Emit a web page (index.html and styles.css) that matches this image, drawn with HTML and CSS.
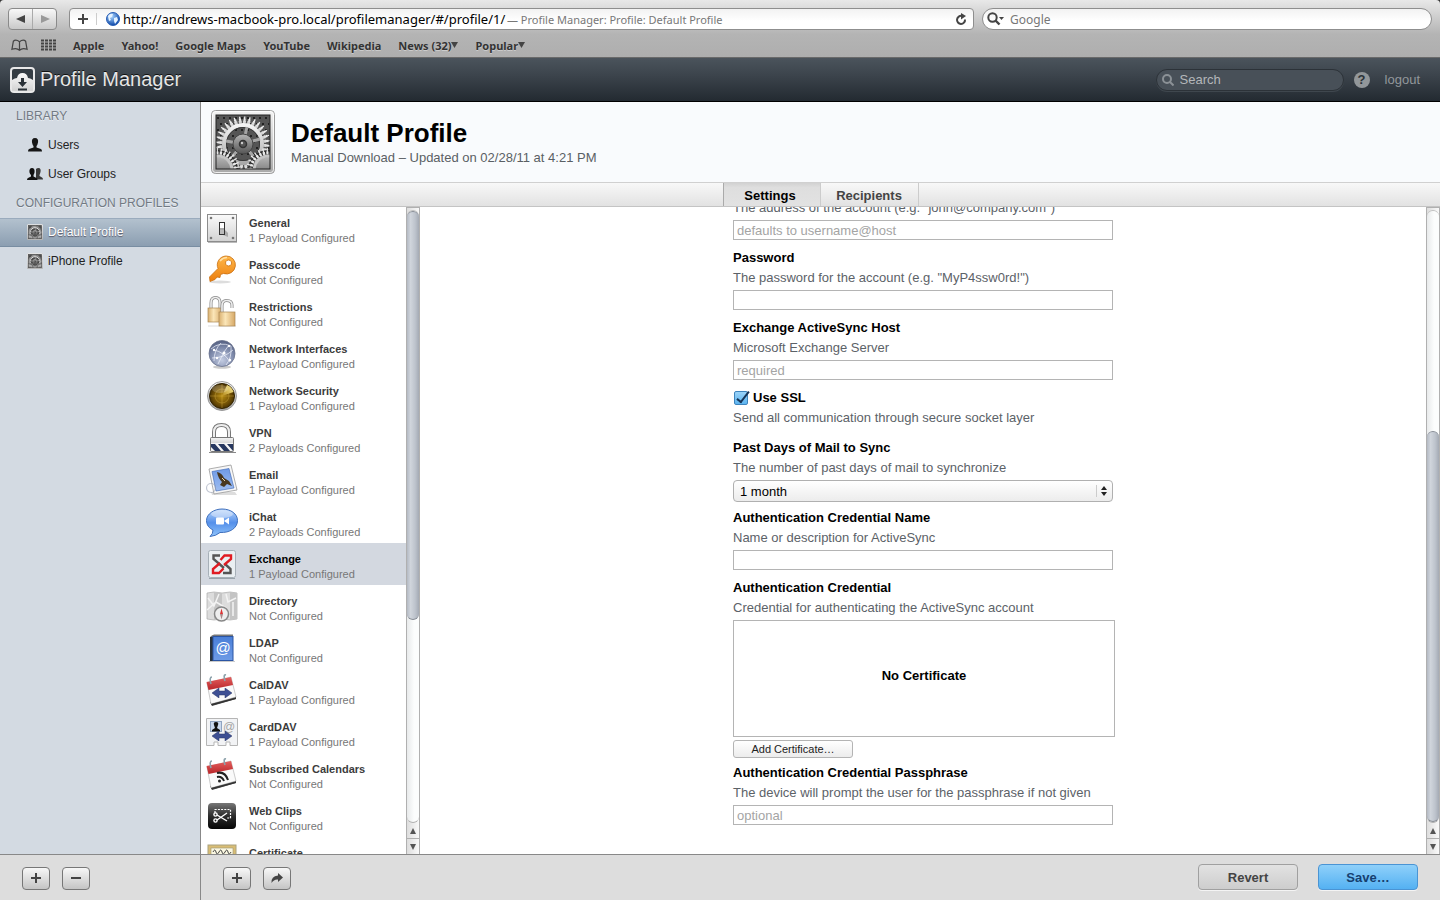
FILE: index.html
```html
<!DOCTYPE html>
<html lang="en">
<head>
    <meta charset="UTF-8">
    <meta name="viewport" content="width=device-width, initial-scale=1.0">
    <link rel="stylesheet" href="styles.css">
    <title>Profile Manager: Profile: Default Profile</title>
</head>
<body>
    <!-- shared gradients and icons -->
    <svg class="defs" width="0" height="0" aria-hidden="true">
        <defs>
            <linearGradient id="metal" x1="0" y1="0" x2="0" y2="1"><stop offset="0" stop-color="#f4f4f4"/><stop offset="1" stop-color="#a8a8a8"/></linearGradient>
            <linearGradient id="steel" x1="0" y1="0" x2="0" y2="1"><stop offset="0" stop-color="#b5b5b5"/><stop offset="1" stop-color="#555"/></linearGradient>
            <linearGradient id="plate" x1="0" y1="0" x2="0" y2="1"><stop offset="0" stop-color="#fafafa"/><stop offset="1" stop-color="#d2d2d2"/></linearGradient>
            <linearGradient id="orange" x1="0" y1="0" x2="0" y2="1"><stop offset="0" stop-color="#ffb84a"/><stop offset="1" stop-color="#ec7d0c"/></linearGradient>
            <linearGradient id="brass" x1="0" y1="0" x2="1" y2="0"><stop offset="0" stop-color="#d9b070"/><stop offset=".4" stop-color="#fbe6b8"/><stop offset="1" stop-color="#d6a866"/></linearGradient>
            <radialGradient id="globe" cx=".5" cy=".75" r=".8"><stop offset="0" stop-color="#c3cce2"/><stop offset=".6" stop-color="#7c88a9"/><stop offset="1" stop-color="#4a5577"/></radialGradient>
            <radialGradient id="radar" cx=".5" cy=".5" r=".6"><stop offset="0" stop-color="#b58a12"/><stop offset=".6" stop-color="#6e4e05"/><stop offset="1" stop-color="#2b1d00"/></radialGradient>
            <linearGradient id="sweep" x1="0" y1="1" x2="1" y2="0"><stop offset="0" stop-color="#b48a1c"/><stop offset="1" stop-color="#fff3a0"/></linearGradient>
            <linearGradient id="bubble" x1="0" y1="0" x2="0" y2="1"><stop offset="0" stop-color="#b9d6fb"/><stop offset=".5" stop-color="#5590ea"/><stop offset="1" stop-color="#8fc4fb"/></linearGradient>
            <linearGradient id="sky" x1="0" y1="0" x2="0" y2="1"><stop offset="0" stop-color="#6f9ae6"/><stop offset="1" stop-color="#9dbcf0"/></linearGradient>
            <linearGradient id="book" x1="0" y1="0" x2="0" y2="1"><stop offset="0" stop-color="#4a7fd8"/><stop offset="1" stop-color="#6d9be6"/></linearGradient>
            <linearGradient id="red" x1="0" y1="0" x2="0" y2="1"><stop offset="0" stop-color="#e4605f"/><stop offset="1" stop-color="#b82529"/></linearGradient>
            <linearGradient id="dark" x1="0" y1="0" x2="0" y2="1"><stop offset="0" stop-color="#777"/><stop offset=".5" stop-color="#2c2c2c"/><stop offset="1" stop-color="#050505"/></linearGradient>
            <radialGradient id="earth" cx=".4" cy=".3" r=".7"><stop offset="0" stop-color="#a9d4ff"/><stop offset="1" stop-color="#0b47a8"/></radialGradient>
            <clipPath id="gear-clip"><rect x="5" y="5" width="54" height="54"/></clipPath>
        </defs>
        <symbol id="gears" viewBox="0 0 64 64">
            <rect x=".5" y=".5" width="63" height="63" rx="4" fill="url(#metal)" stroke="#9a9a9a"/>
            <rect x="1.5" y="1.5" width="61" height="61" rx="3" fill="none" stroke="#fff" stroke-opacity=".8"/>
            <rect x="5" y="5" width="54" height="54" fill="#555"/>
            <g clip-path="url(#gear-clip)">
                <path d="M6 8H58M9 14H58M6 20H58M9 26H58M6 32H58M9 38H58M6 44H58" stroke="#222" stroke-width="2" stroke-dasharray="2 4"/>
                <!-- main gear: each tooth is a wide base with a narrow tip -->
                <g fill="none">
                    <circle cx="32" cy="34" r="22" stroke="#d2d2d2" stroke-width="3" pathLength="64" stroke-dasharray="1.4 .6"/>
                    <circle cx="32" cy="34" r="24" stroke="#e2e2e2" stroke-width="3" pathLength="64" stroke-dasharray=".9 1.1" stroke-dashoffset="-.25"/>
                    <circle cx="32" cy="34" r="26" stroke="#f2f2f2" stroke-width="3" pathLength="64" stroke-dasharray=".5 1.5" stroke-dashoffset="-.45"/>
                    <circle cx="32" cy="34" r="19" stroke="url(#metal)" stroke-width="4"/>
                    <circle cx="32" cy="34" r="16.5" stroke="#3a3a3a"/>
                    <path d="M32 34L36 17M32 34L15 31M32 34L49 29M32 34L21 47M32 34L43 47" stroke="#a5a5a5" stroke-width="3"/>
                </g>
                <circle cx="32" cy="34" r="10" fill="url(#steel)" stroke="#444"/>
                <circle cx="32" cy="34" r="3.5" fill="#555" stroke="#333" stroke-width="1.5"/>
                <circle cx="31" cy="33" r="1.2" fill="#ccc"/>
                <circle cx="7" cy="60" r="20" fill="#2c2c2c"/>
                <circle cx="57" cy="60" r="20" fill="#2c2c2c"/>
                <circle cx="7" cy="60" r="13" fill="url(#steel)"/>
                <circle cx="57" cy="60" r="13" fill="url(#steel)"/>
                <g fill="none" stroke="#e8e8e8">
                    <circle cx="7" cy="60" r="17" stroke-width="3" pathLength="60" stroke-dasharray="1.3 .7"/>
                    <circle cx="7" cy="60" r="20" stroke-width="4" pathLength="60" stroke-dasharray=".6 1.4" stroke-dashoffset="-.35"/>
                    <circle cx="57" cy="60" r="17" stroke-width="3" pathLength="60" stroke-dasharray="1.3 .7"/>
                    <circle cx="57" cy="60" r="20" stroke-width="4" pathLength="60" stroke-dasharray=".6 1.4" stroke-dashoffset="-.35"/>
                    <circle cx="7" cy="60" r="14" stroke-width="3" stroke="#c4c4c4"/>
                    <circle cx="57" cy="60" r="14" stroke-width="3" stroke="#c4c4c4"/>
                </g>
            </g>
            <rect x="5" y="5" width="54" height="54" fill="none" stroke="#222"/>
        </symbol>
        <symbol id="calendar" viewBox="0 0 32 32">
            <path d="M4 28L30 22V25L6 32Z" fill="#555"/>
            <path d="M1 9L25 3L30 23L5 30Z" fill="#fafafa" stroke="#aaa" stroke-width=".6"/>
            <path d="M5 30L30 23.5V25L6 31.5Z" fill="#333"/>
            <path d="M.5 8L25 3L27 11L2.5 16Z" fill="url(#red)"/>
            <path d="M5 10Q3 3 6 3M19 7Q17 0 20 1" fill="none" stroke="#8ca1ab" stroke-width="1.6"/>
        </symbol>
        <symbol id="arrows" viewBox="0 0 20 10">
            <path d="M0 5L7 0V3H13V0L20 5L13 10V7H7V10Z" fill="#3d4f93" stroke="#293667" stroke-width=".5"/>
        </symbol>
    </svg>

    <div class="browser">
        <div class="toolbar">
            <div class="history">
                <button type="button" aria-label="Back"><svg width="10" height="10" viewBox="0 0 10 10"><path d="M9 1V9L0 5Z" fill="#444"/></svg></button>
                <button type="button" aria-label="Forward"><svg width="10" height="10" viewBox="0 0 10 10"><path d="M1 1V9L10 5Z" fill="#999"/></svg></button>
            </div>
            <div class="location">
                <button type="button" class="add-bookmark" aria-label="Add bookmark"><svg width="12" height="12" viewBox="0 0 12 12"><path d="M6 1V11M1 6H11" stroke="#444" stroke-width="2"/></svg></button>
                <svg class="site-icon" width="14" height="14" viewBox="0 0 14 14"><circle cx="7" cy="7" r="6.5" fill="url(#earth)" stroke="#2b5fb5"/><path d="M2 4Q4 1 7 2L6 5L4 6L5 8L3 9ZM8 6L11 5L12 8L9 12L8 9Z" fill="#e6f3ff"/></svg>
                <input class="url" type="text" aria-label="Address" value="http://andrews-macbook-pro.local/profilemanager/#/profile/1/">
                <span class="page-title">— Profile Manager: Profile: Default Profile</span>
                <button type="button" class="reload" aria-label="Reload"><svg width="12" height="14" viewBox="0 0 12 14"><path d="M10 7.5A4 4 0 1 1 7 4" fill="none" stroke="#444" stroke-width="2"/><path d="M6 1L11 4L6 7.5Z" fill="#444"/></svg></button>
            </div>
            <div class="google">
                <svg width="19" height="14" viewBox="0 0 19 14"><circle cx="5.5" cy="5.5" r="4.2" fill="none" stroke="#444" stroke-width="2"/><path d="M8.5 8.5L12.5 12.5" stroke="#444" stroke-width="2.4"/><path d="M12 5H17L14.500 8Z" fill="#444"/></svg>
                <input type="text" aria-label="Google search" placeholder="Google">
            </div>
        </div>
        <nav class="bookmarks">
            <div class="bookmark-icons">
                <a href="#" aria-label="Show all bookmarks"><svg width="17" height="13" viewBox="0 0 18 13"><path d="M9 2.5Q5 -.5 2.5 2L1 10.5Q6 8.5 9 11.5Q12 8.5 17 10.5L15.5 2Q13 -.5 9 2.5ZM9 2.5V11.5" fill="none" stroke="#444" stroke-width="1.3"/></svg></a>
                <a href="#" aria-label="Top sites"><svg width="15" height="12" viewBox="0 0 15 12"><path d="M0 1.5H15M0 4.5H15M0 7.5H15M0 10.5H15" stroke="#444" stroke-width="2" stroke-dasharray="3 1"/></svg></a>
            </div>
            <a href="#">Apple</a>
            <a href="#">Yahoo!</a>
            <a href="#">Google Maps</a>
            <a href="#">YouTube</a>
            <a href="#">Wikipedia</a>
            <a href="#">News (32)<svg width="7" height="6" viewBox="0 0 7 6"><path d="M0 0H7L3.5 6Z" fill="#444"/></svg></a>
            <a href="#">Popular<svg width="7" height="6" viewBox="0 0 7 6"><path d="M0 0H7L3.5 6Z" fill="#444"/></svg></a>
        </nav>
    </div>

    <header class="app-header">
        <svg width="25" height="26" viewBox="0 0 25 26"><rect x="1" y="1" width="23" height="24" rx="3" fill="#343c43" stroke="#e8e8e8" stroke-width="2"/><path d="M2 13Q5 11 7 11Q8 6 12.5 6Q17 6 18 11Q20 11 23 13V24H2Z" fill="url(#plate)"/><path d="M11 11H14V15H17L12.5 20L8 15H11Z" fill="#2b3238"/><path d="M8 22.5H17" stroke="#2b3238" stroke-width="2"/></svg>
        <h1>Profile Manager</h1>
        <div class="search">
            <svg width="12" height="12" viewBox="0 0 12 12"><circle cx="5" cy="5" r="4" fill="none" stroke="#8b9196" stroke-width="2"/><path d="M8 8L11.5 11.5" stroke="#8b9196" stroke-width="2"/></svg>
            <input type="text" aria-label="Search" placeholder="Search">
        </div>
        <button type="button" class="help" aria-label="Help">?</button>
        <a class="logout" href="#">logout</a>
    </header>

    <div class="content">
        <nav class="sidebar">
            <h2>LIBRARY</h2>
            <a href="#"><svg width="16" height="16" viewBox="0 0 16 16"><path d="M8 1C10.5 1 11.5 3 11 5.5Q10.5 8 9.5 9V10.5L14 12Q15 12.5 15 14.5H1Q1 12.5 2 12L6.5 10.5V9Q5.5 8 5 5.5C4.5 3 5.5 1 8 1Z" fill="#161616"/></svg>Users</a>
            <a href="#"><svg width="16" height="16" viewBox="0 0 16 16"><path d="M11.5 2C13.5 2 14 4 13.5 6Q13 8 12.5 9V10L15 11.5Q16 12 16 13.5H9V3Q10 2 11.5 2Z" fill="#383838"/><path d="M5 2C7 2 8 4 7.5 6.5Q7 8 6.5 9V10.5L9.5 12Q10.5 12.5 10.5 14H0Q0 12.5 1 12L4 10.5V9Q3 8 2.5 6.5C2 4 3 2 5 2Z" fill="#111"/></svg>User Groups</a>
            <h2>CONFIGURATION PROFILES</h2>
            <a href="#" class="selected"><svg width="16" height="16"><use href="#gears"/></svg>Default Profile</a>
            <a href="#"><svg width="16" height="16"><use href="#gears"/></svg>iPhone Profile</a>
        </nav>

        <main class="main">
            <div class="profile-header">
                <svg width="64" height="64"><use href="#gears"/></svg>
                <div>
                    <h2>Default Profile</h2>
                    <p>Manual Download – Updated on 02/28/11 at 4:21 PM</p>
                </div>
            </div>
            <div class="tabs">
                <button type="button" class="active">Settings</button>
                <button type="button">Recipients</button>
            </div>

            <div class="panes">
                <nav class="payloads">
                    <a href="#">
                        <svg width="32" height="32" viewBox="0 0 32 32"><rect x="1.5" y="2.5" width="29" height="27" fill="url(#plate)" stroke="#8c8c8c"/><path d="M2 30.5H31" stroke="#bbb"/><g fill="#777"><circle cx="5" cy="6" r="1.3"/><circle cx="27" cy="6" r="1.3"/><circle cx="5" cy="26" r="1.3"/><circle cx="27" cy="26" r="1.3"/></g><path d="M17 16L22 21V25L17 23Z" fill="#aaa"/><rect x="13.5" y="10.5" width="5" height="12" fill="#fff" stroke="#333"/><path d="M14 18H18V22H14Z" fill="#bbb"/><path d="M14 17H18" stroke="#555"/></svg>
                        <span><b>General</b>1 Payload Configured</span>
                    </a>
                    <a href="#">
                        <svg width="32" height="32" viewBox="0 0 32 32"><ellipse cx="14" cy="28" rx="11" ry="1.5" fill="#ddd"/><path fill-rule="evenodd" d="M20 2A9 9 0 1 1 17.5 19.5L14.5 20.5L14 23.5L11 23L9 25.5L4 27.5L3.5 23L12 14.5A9 9 0 0 1 20 2ZM22.5 6A3 3 0 1 0 22.6 6Z" fill="url(#orange)" stroke="#c96f10" stroke-width=".8"/><path d="M14 7Q17 3.5 21 3.5" fill="none" stroke="#ffe0a6" stroke-width="1.5"/></svg>
                        <span><b>Passcode</b>Not Configured</span>
                    </a>
                    <a href="#">
                        <svg width="32" height="32" viewBox="0 0 32 32"><path d="M2 30H30" stroke="#ddd"/><path d="M5 14V7Q5 1.5 9.5 1.5Q14 1.5 14 7V14" fill="none" stroke="#888" stroke-width="3"/><path d="M5 14V7Q5 1.5 9.5 1.5Q14 1.5 14 7V14" fill="none" stroke="#eee" stroke-width="1.6"/><rect x="2" y="12" width="14" height="14" fill="url(#brass)" stroke="#a88653" stroke-width=".7"/><path d="M16 17V10Q16 4.5 20.5 4.5Q26 4.5 26 9V12" fill="none" stroke="#888" stroke-width="3"/><path d="M16 17V10Q16 4.5 20.5 4.5Q26 4.5 26 9V12" fill="none" stroke="#eee" stroke-width="1.6"/><rect x="13" y="16" width="16" height="14" fill="url(#brass)" stroke="#a88653" stroke-width=".7"/></svg>
                        <span><b>Restrictions</b>Not Configured</span>
                    </a>
                    <a href="#">
                        <svg width="32" height="32" viewBox="0 0 32 32"><ellipse cx="16" cy="29" rx="9" ry="1.8" fill="#ccc"/><circle cx="16" cy="15.500" r="13" fill="url(#globe)" stroke="#69728d" stroke-width=".8"/><path d="M5 11Q14 3 25 8M8 23Q8 12 15 5M8 12Q18 14 24 24M6 20Q18 20 27 12M12 26L18 14L23 7M20 27Q26 20 25 8" fill="none" stroke="#f4f7ff" stroke-width=".7"/><g fill="#fff"><circle cx="18" cy="15" r="1.5"/><circle cx="8" cy="12" r="1.2"/><circle cx="23" cy="8" r="1.2"/><circle cx="11" cy="20" r="1.2"/><circle cx="24" cy="22" r="1.2"/></g></svg>
                        <span><b>Network Interfaces</b>1 Payload Configured</span>
                    </a>
                    <a href="#">
                        <svg width="32" height="32" viewBox="0 0 32 32"><circle cx="16" cy="16" r="14.5" fill="url(#metal)" stroke="#888" stroke-width=".8"/><circle cx="16" cy="16" r="12.5" fill="url(#radar)" stroke="#332300"/><path d="M16 16L21 5Q26 7 27.5 12Z" fill="url(#sweep)"/><path d="M4 16H28M16 4V28" stroke="#e0bb4b" stroke-opacity=".5" stroke-width=".7"/><circle cx="16" cy="16" r="7" fill="none" stroke="#e0bb4b" stroke-opacity=".5" stroke-width=".7"/><ellipse cx="14" cy="9" rx="8" ry="4" fill="#fff" fill-opacity=".2"/></svg>
                        <span><b>Network Security</b>1 Payload Configured</span>
                    </a>
                    <a href="#">
                        <svg width="32" height="32" viewBox="0 0 32 32"><path d="M8 17V10Q8 3 15.5 3Q23 3 23 10V17" fill="none" stroke="#777" stroke-width="4"/><path d="M8 17V10Q8 3 15.5 3Q23 3 23 10V17" fill="none" stroke="#eee" stroke-width="2"/><path d="M3 30.5H30" stroke="#888"/><rect x="4.5" y="15.5" width="23" height="14" rx="1" fill="url(#metal)" stroke="#777"/><path d="M5 21H27V29H5Z" fill="#f4f4f4"/><path d="M5 22H9L15 29H9L5 25ZM12 22H18L24 29H18ZM21 22H27V29Z" fill="#27375f"/></svg>
                        <span><b>VPN</b>2 Payloads Configured</span>
                    </a>
                    <a href="#">
                        <svg width="32" height="32" viewBox="0 0 32 32"><path d="M6 31H31L29 28H5Z" fill="#ddd"/><path d="M3 5L25 1L31 26L8 30Z" fill="#f7f7f7" stroke="#999" stroke-width=".8"/><path d="M6 7.5L23 4.5L28 24L10 27Z" fill="url(#sky)" stroke="#3a65b4" stroke-width=".6"/><path d="M11 8Q16 9 18 14L23 17L26 22L21 20L18 23L14 21L16 18Q12 14 11 8Z" fill="#49381f"/><path d="M16 14L19 17" stroke="#e8d8b0"/><circle cx="5" cy="24" r="4.5" fill="none" stroke="#9aa2b5" stroke-width="1.2" stroke-opacity=".6"/></svg>
                        <span><b>Email</b>1 Payload Configured</span>
                    </a>
                    <a href="#">
                        <svg width="32" height="32" viewBox="0 0 32 32"><path d="M16 3C25 3 31.500 8 31.500 14.5C31.500 22 24 27 14 26.500Q10 30 4 30.500Q7 28 7 24C3 22 .5 19 .5 14.5C.5 8 8 3 16 3Z" fill="url(#bubble)" stroke="#3f70bd"/><ellipse cx="16" cy="8" rx="11" ry="4" fill="#fff" fill-opacity=".4"/><rect x="10" y="11.5" width="8" height="7" rx="1" fill="#fff"/><path d="M18 15L23 11.5V18.5Z" fill="#fff"/></svg>
                        <span><b>iChat</b>2 Payloads Configured</span>
                    </a>
                    <a href="#" class="selected">
                        <svg width="32" height="32" viewBox="0 0 32 32"><rect x="2.5" y="2.5" width="27" height="27" rx="2" fill="#eaeff2" stroke="#a7b0b8"/><path d="M3 30.5H29" stroke="#99a3aa"/><g fill="none" stroke-width="2.4"><path d="M14 7.5H7.5V11L18 20" stroke="#555"/><path d="M17 25H24.500V21L19 16" stroke="#555"/><path d="M14.500 12L18.500 7.500H25V11L18 17" stroke="#e01b22"/><path d="M17.500 20.500L13 25H7V21L14 15" stroke="#e01b22"/></g></svg>
                        <span><b>Exchange</b>1 Payload Configured</span>
                    </a>
                    <a href="#">
                        <svg width="32" height="32" viewBox="0 0 32 32"><path d="M1 3L8 2L16 3L24 2L31 3V29L24 30L16 29L8 30L1 29Z" fill="#dcdcdc" stroke="#aaa" stroke-width=".7"/><path d="M8 2V30L16 29V3ZM24 2V30L31 29V3Z" fill="#c4c4c4"/><path d="M2 8L8 16L13 4M1 20L10 12L20 18M20 4L22 12L30 8M27 12V26" fill="none" stroke="#f3f3f3" stroke-width="1.5"/><circle cx="15.5" cy="24" r="7" fill="#eee" stroke="#888" stroke-width="1.5"/><path d="M15.5 18.5L17 24H14Z" fill="#d33"/><path d="M15.5 29.5L17 24H14Z" fill="#a88"/></svg>
                        <span><b>Directory</b>Not Configured</span>
                    </a>
                    <a href="#">
                        <svg width="32" height="32" viewBox="0 0 32 32"><path d="M3 29.5H29" stroke="#ccc"/><path d="M4 5L8 3V29H4Z" fill="#29343f"/><path d="M5 4L8 2.5H27V5H5Z" fill="#777"/><rect x="7" y="4.5" width="20" height="24" fill="url(#book)" stroke="#2b55a3"/><text x="17" y="21" text-anchor="middle" font-size="15" font-family="Liberation Sans, sans-serif" fill="#fff">@</text></svg>
                        <span><b>LDAP</b>Not Configured</span>
                    </a>
                    <a href="#">
                        <svg width="32" height="32" viewBox="0 0 32 32"><use href="#calendar" width="32" height="32"/><use href="#arrows" x="6" y="14" width="20" height="10"/></svg>
                        <span><b>CalDAV</b>1 Payload Configured</span>
                    </a>
                    <a href="#">
                        <svg width="32" height="32" viewBox="0 0 32 32"><path d="M.5 2.5H31.5V29.5H24V26H20V29.5H12V26H8V29.5H.5Z" fill="#f2f3f5" stroke="#b5b5b5"/><rect x="4.5" y="5.5" width="11" height="10" fill="#c9d8ee" stroke="#8fa3c0"/><path d="M10 6Q13 6 12 9L11 12L14 14V15.5H6V14L9 12L8 9Q7 6 10 6Z" fill="#111"/><text x="23" y="15" text-anchor="middle" font-size="12" font-family="Liberation Sans, sans-serif" fill="#a5a5a5">@</text><use href="#arrows" x="6" y="15" width="20" height="10"/></svg>
                        <span><b>CardDAV</b>1 Payload Configured</span>
                    </a>
                    <a href="#">
                        <svg width="32" height="32" viewBox="0 0 32 32"><use href="#calendar" width="32" height="32"/><g fill="none" stroke="#222" stroke-width="2"><path d="M11 15Q19 13 22 22"/><path d="M11 19Q16 18 18 23"/></g><circle cx="13.5" cy="23" r="1.5" fill="#222"/></svg>
                        <span><b>Subscribed Calendars</b>Not Configured</span>
                    </a>
                    <a href="#">
                        <svg width="32" height="32" viewBox="0 0 32 32"><rect x="2" y="3" width="28" height="26" rx="4" fill="url(#dark)"/><path d="M9 13V9.5H24.5V18H20" fill="none" stroke="#fff" stroke-width="1.2" stroke-dasharray="2 1.2"/><g fill="none" stroke="#fff" stroke-width="1.4"><path d="M11 15L21 21M11 20L21 13"/><circle cx="9.5" cy="14.5" r="1.6"/><circle cx="9.5" cy="20.5" r="1.6"/></g></svg>
                        <span><b>Web Clips</b>Not Configured</span>
                    </a>
                    <a href="#">
                        <svg width="32" height="32" viewBox="0 0 32 32"><rect x="2" y="3" width="28" height="24" fill="#d9bd74" stroke="#aaa27f"/><rect x="5" y="6" width="22" height="18" fill="#fbf8e2" stroke="#9b9476" stroke-width=".6"/><path d="M7 10Q9 6 10 10T13 10T16 10T19 10T22 10T25 10" fill="none" stroke="#444"/></svg>
                        <span><b>Certificate</b></span>
                    </a>
                </nav>
                <div class="scrollbar">
                    <div class="track"><div class="thumb thumb-list"></div></div>
                    <button type="button" aria-label="Scroll up"><svg width="6" height="6" viewBox="0 0 6 6"><path d="M3 0L6 6H0Z" fill="#555"/></svg></button>
                    <button type="button" aria-label="Scroll down"><svg width="6" height="6" viewBox="0 0 6 6"><path d="M3 6L6 0H0Z" fill="#555"/></svg></button>
                </div>

                <div class="form-pane">
                    <form class="settings">
                        <div class="field">
                            <label class="hint" for="address">The address of the account (e.g. "john@company.com")</label>
                            <input type="text" id="address" placeholder="defaults to username@host">
                        </div>
                        <div class="field">
                            <label for="password">Password</label>
                            <p class="hint">The password for the account (e.g. "MyP4ssw0rd!")</p>
                            <input type="password" id="password">
                        </div>
                        <div class="field">
                            <label for="host">Exchange ActiveSync Host</label>
                            <p class="hint">Microsoft Exchange Server</p>
                            <input type="text" id="host" placeholder="required">
                        </div>
                        <div class="field ssl">
                            <div class="check">
                                <input type="checkbox" id="ssl" checked>
                                <label for="ssl">Use SSL</label>
                            </div>
                            <p class="hint">Send all communication through secure socket layer</p>
                        </div>
                        <div class="field days">
                            <label for="days">Past Days of Mail to Sync</label>
                            <p class="hint">The number of past days of mail to synchronize</p>
                            <div class="select">
                                <select id="days">
                                    <option>1 month</option>
                                </select>
                                <svg width="6" height="10" viewBox="0 0 6 10"><path d="M3 0L6 4H0ZM3 10L6 6H0Z" fill="#222"/></svg>
                            </div>
                        </div>
                        <div class="field">
                            <label for="cred-name">Authentication Credential Name</label>
                            <p class="hint">Name or description for ActiveSync</p>
                            <input type="text" id="cred-name">
                        </div>
                        <div class="field credential">
                            <label for="add-cert">Authentication Credential</label>
                            <p class="hint">Credential for authenticating the ActiveSync account</p>
                            <div class="cert-box">No Certificate</div>
                            <button type="button" id="add-cert">Add Certificate…</button>
                        </div>
                        <div class="field">
                            <label for="passphrase">Authentication Credential Passphrase</label>
                            <p class="hint">The device will prompt the user for the passphrase if not given</p>
                            <input type="text" id="passphrase" placeholder="optional">
                        </div>
                    </form>
                </div>
                <div class="scrollbar">
                    <div class="track"><div class="thumb thumb-form"></div></div>
                    <button type="button" aria-label="Scroll up"><svg width="6" height="6" viewBox="0 0 6 6"><path d="M3 0L6 6H0Z" fill="#555"/></svg></button>
                    <button type="button" aria-label="Scroll down"><svg width="6" height="6" viewBox="0 0 6 6"><path d="M3 6L6 0H0Z" fill="#555"/></svg></button>
                </div>
            </div>
        </main>
    </div>

    <footer class="footer">
        <div class="footer-side">
            <button type="button" class="small-button" aria-label="Add profile"><svg width="10" height="10" viewBox="0 0 10 10"><path d="M5 0V10M0 5H10" stroke="#444" stroke-width="2"/></svg></button>
            <button type="button" class="small-button" aria-label="Remove profile"><svg width="10" height="10" viewBox="0 0 10 10"><path d="M0 5H10" stroke="#444" stroke-width="2"/></svg></button>
        </div>
        <div class="footer-main">
            <button type="button" class="small-button" aria-label="Add payload"><svg width="10" height="10" viewBox="0 0 10 10"><path d="M5 0V10M0 5H10" stroke="#444" stroke-width="2"/></svg></button>
            <button type="button" class="small-button" aria-label="Share"><svg width="12" height="10" viewBox="0 0 12 10"><path d="M7 0L12 4.5L7 9V6.5Q3 6 .5 10Q0 3 7 2.5Z" fill="#444"/></svg></button>
            <button type="button" class="big-button revert">Revert</button>
            <button type="button" class="big-button save">Save…</button>
        </div>
    </footer>
</body>
</html>
```
FILE: styles.css
```css
* {
    box-sizing: border-box;
}

body {
    margin: 0;
    height: 100vh;
    display: flex;
    flex-direction: column;
    overflow: hidden;
    background: #333;
    font-family: "Liberation Sans", Arial, Helvetica, sans-serif;
    font-size: 13px;
}

h1, h2, p {
    margin: 0;
}

a {
    color: inherit;
    text-decoration: none;
}

button, input, select {
    font-family: inherit;
    font-size: inherit;
    margin: 0;
    padding: 0;
}

svg {
    display: block;
    flex: none;
}

.defs {
    position: absolute;
}

/* browser chrome */
.browser {
    height: 58px;
    flex: none;
    background: linear-gradient(#e8e8e8 0, #b4b4b4 34px, #aeaeae 100%);
    border-bottom: 1px solid #6a6a6a;
    border-radius: 4px 4px 0 0;
    font-family: "Noto Sans", sans-serif;
}

.toolbar {
    display: flex;
    padding: 8px 8px 0;
}

.history {
    display: flex;
    width: 49px;
    height: 22px;
    margin-right: 12px;
    border: 1px solid #8a8a8a;
    border-radius: 4px;
    background: linear-gradient(#f8f8f8, #c9c9c9);
}

.history button {
    flex: 1;
    display: flex;
    align-items: center;
    justify-content: center;
    border: none;
    background: none;
}

.history button + button {
    border-left: 1px solid #aaa;
}

.location, .google {
    display: flex;
    align-items: center;
    height: 22px;
    border: 1px solid #8e8e8e;
    background: linear-gradient(#f2f2f2, #fff 60%);
}

.location {
    flex: 1;
    border-radius: 4px;
}

.google {
    width: 450px;
    margin-left: 8px;
    padding-left: 4px;
    border-radius: 11px;
}

.toolbar input {
    border: none;
    background: none;
    outline: none;
}

.add-bookmark, .reload {
    display: flex;
    border: none;
    background: none;
    padding: 0 7px;
}

.add-bookmark {
    border-right: 1px solid #ccc;
    margin-right: 9px;
}

.reload {
    margin-left: auto;
    padding: 0 6px;
}

.url {
    width: 384px;
    margin-left: 3px;
    font-size: 13px;
}

.page-title {
    color: #777;
    font-size: 11px;
}

.google input {
    flex: 1;
    margin-left: 4px;
    font-size: 12px;
}

.google input::placeholder {
    color: #777;
}

.bookmarks {
    display: flex;
    align-items: center;
    gap: 17px;
    height: 30px;
    padding-left: 11px;
    color: #333;
    font-size: 11px;
    font-weight: bold;
    text-shadow: 0 1px 0 #ccc;
}

.bookmarks a {
    display: flex;
    align-items: center;
}

.bookmark-icons {
    display: flex;
    gap: 13px;
}

/* app header */
.app-header {
    display: flex;
    align-items: center;
    height: 44px;
    flex: none;
    padding: 0 20px 0 10px;
    background: linear-gradient(#4b545c, #3c444c 40%, #232a31);
    border-bottom: 1px solid #000;
}

.app-header h1 {
    margin-left: 5px;
    color: #e6e6e6;
    font-size: 20px;
    font-weight: normal;
    text-shadow: 0 -1px 0 #111;
}

.search {
    display: flex;
    align-items: center;
    width: 188px;
    height: 22px;
    margin-left: auto;
    padding-left: 5px;
    border: 1px solid #2c3238;
    border-radius: 11px;
    background: #485058;
    box-shadow: 0 1px 0 #3f474e;
}

.search input {
    width: 150px;
    margin-left: 6px;
    border: none;
    background: none;
    outline: none;
    color: #bbb;
}

.search input::placeholder {
    color: #b4b7ba;
}

.help {
    width: 16px;
    height: 16px;
    margin: 0 15px 0 10px;
    border: none;
    border-radius: 50%;
    background: #92979a;
    color: #2b3238;
    font-weight: bold;
    line-height: 16px;
}

.logout {
    color: #92979b;
}

/* sidebar */
.content {
    display: flex;
    flex: 1;
    min-height: 0;
}

.sidebar {
    width: 201px;
    flex: none;
    background: #d3dae2;
    border-right: 1px solid #888;
}

.sidebar h2, .sidebar a {
    display: flex;
    align-items: center;
    height: 29px;
    padding-bottom: 2px;
    font-size: 12px;
}

.sidebar h2 {
    padding-left: 16px;
    color: #727a83;
    font-weight: normal;
    text-shadow: 0 1px 0 #e8edf2;
}

.sidebar a {
    gap: 5px;
    padding-left: 27px;
    color: #222;
}

.sidebar .selected {
    background: linear-gradient(#b3c1ce, #8b9eb1);
    border-top: 1px solid #9aabbd;
    border-bottom: 1px solid #788da2;
    color: #fff;
    text-shadow: 0 1px 1px #556;
}

/* profile */
.main {
    flex: 1;
    min-width: 0;
    display: flex;
    flex-direction: column;
    background: #fff;
}

.profile-header {
    display: flex;
    align-items: center;
    gap: 16px;
    height: 80px;
    flex: none;
    padding-left: 10px;
    background: #f9fbfd;
}

.profile-header h2 {
    padding-top: 2px;
    color: #000;
    font-size: 26px;
    line-height: 30px;
}

.profile-header p {
    color: #5a5f64;
    line-height: 20px;
}

.tabs {
    display: flex;
    justify-content: center;
    height: 25px;
    flex: none;
    background: linear-gradient(#f8f8f8, #e2e2e2);
    border-top: 1px solid #d0d0d0;
    border-bottom: 1px solid #c4c4c4;
}

.tabs button {
    width: 98px;
    border: none;
    border-right: 1px solid #ccc;
    background: none;
    color: #444;
    font-weight: bold;
    padding-top: 2px;
}

.tabs .active {
    padding-right: 3px;
    border-left: 1px solid #aaa;
    background: linear-gradient(#d2d2d2, #dedede 20%, #e2e2e2);
    color: #000;
}

.panes {
    display: flex;
    flex: 1;
    min-height: 0;
}

/* payload list */
.payloads {
    width: 205px;
    flex: none;
    overflow: hidden;
}

.payloads a {
    display: flex;
    gap: 11px;
    height: 42px;
    padding: 5px 0 0 5px;
    color: #777;
    font-size: 11px;
    line-height: 15px;
}

.payloads span {
    padding-top: 4px;
}

.payloads b {
    display: block;
    color: #3c3c3c;
}

.payloads .selected {
    background: #d3d8e0;
}

.payloads .selected b {
    color: #000;
}

/* scrollbars */
.scrollbar {
    display: flex;
    flex-direction: column;
    width: 14px;
    flex: none;
    padding-top: 3px;
    background: linear-gradient(90deg, #ddd, #fafafa);
    border: 1px solid #b0b0b0;
    border-bottom: none;
}

.track {
    flex: 1;
    display: flex;
    border-bottom: 1px solid #b0b0b0;
    border-radius: 6px;
    background: linear-gradient(90deg, #e8eaeb, #fcfdfd 60%);
    box-shadow: 0 -1px 0 #c0c0c0;
}

.thumb {
    flex: 1;
    border: 1px solid #858b94;
    border-width: 1px 0;
    border-radius: 6px;
    background: linear-gradient(90deg, #b4bac4, #d0d5dc 30%, #bcc2cb 70%, #a4aab4);
}

.thumb-list {
    height: 67%;
}

.thumb-form {
    height: 64%;
    align-self: flex-end;
}

.scrollbar button {
    display: flex;
    align-items: center;
    justify-content: center;
    height: 15px;
    border: none;
    background: none;
}

.scrollbar button + button {
    height: 16px;
    border-top: 1px solid #b0b0b0;
}

/* settings form, scrolled to its end */
.form-pane {
    flex: 1;
    display: flex;
    flex-direction: column;
    justify-content: flex-end;
    align-items: center;
    overflow: hidden;
    padding-bottom: 29px;
}

.settings {
    display: flex;
    flex-direction: column;
    gap: 8px;
    width: 380px;
    flex: none;
}

.field label {
    display: block;
    color: #000;
    font-weight: bold;
    line-height: 20px;
}

.field .hint {
    margin-bottom: 2px;
    color: #5c6268;
    font-weight: normal;
    line-height: 20px;
}

.field input[type="text"], .field input[type="password"] {
    display: block;
    width: 100%;
    height: 20px;
    padding: 0 3px;
    border: 1px solid #b4b4b4;
    background: #fff;
}

.field input::placeholder {
    color: #a4a4a4;
}

.check {
    display: flex;
    align-items: center;
    gap: 5px;
    height: 20px;
}

.check input {
    position: relative;
    appearance: none;
    width: 14px;
    height: 14px;
    margin-left: 1px;
    border: 1px solid #3e84bd;
    border-radius: 2px;
    background: linear-gradient(#9ad3f8, #5db5f0);
}

.check input:checked::after {
    content: "";
    position: absolute;
    left: 5px;
    top: -3px;
    width: 4px;
    height: 12px;
    border: solid #163457;
    border-width: 0 2px 2px 0;
    transform: rotate(38deg);
}

.days {
    margin-bottom: -2px;
}

.select {
    position: relative;
}

.select select {
    display: block;
    appearance: none;
    width: 100%;
    height: 22px;
    padding-left: 6px;
    border: 1px solid #b0b0b0;
    border-radius: 4px;
    background: linear-gradient(#fff, #ececec);
    color: #000;
}

.select svg {
    position: absolute;
    right: 6px;
    top: 6px;
}

.select::after {
    content: "";
    position: absolute;
    right: 16px;
    top: 5px;
    height: 12px;
    border-left: 1px solid #ccc;
}

.cert-box {
    display: flex;
    align-items: center;
    justify-content: center;
    width: 382px;
    height: 117px;
    padding-bottom: 6px;
    border: 1px solid #b4b4b4;
    color: #000;
    font-weight: bold;
}

.credential {
    margin-bottom: -3px;
}

.credential button {
    display: block;
    width: 120px;
    height: 18px;
    margin-top: 3px;
    border: 1px solid #b4b4b4;
    border-radius: 3px;
    background: linear-gradient(#fff, #ececec);
    color: #222;
    font-size: 11px;
}

/* footer */
.footer {
    display: flex;
    height: 46px;
    flex: none;
    background: #ddd;
    border-top: 1px solid #888;
}

.footer-side, .footer-main {
    display: flex;
    align-items: center;
    gap: 12px;
    padding: 1px 22px 0;
}

.footer-side {
    width: 201px;
    border-right: 1px solid #888;
}

.footer-main {
    flex: 1;
}

.small-button {
    display: flex;
    align-items: center;
    justify-content: center;
    width: 28px;
    height: 23px;
    border: 1px solid #777;
    border-radius: 4px;
    background: linear-gradient(#f8f8f8, #c4c4c4);
}

.big-button {
    width: 100px;
    height: 26px;
    margin-bottom: 2px;
    border: 1px solid #a0a0a0;
    border-radius: 4px;
    background: linear-gradient(#e2e2e2, #cdcdcd);
    box-shadow: 0 1px 0 #f4f4f4;
    color: #444;
    font-weight: bold;
}

.revert {
    margin-left: auto;
}

.save {
    margin-left: 8px;
    border-color: #4a94d4;
    background: linear-gradient(#8fd0fa, #54b1f2);
    color: #163f70;
}
```
